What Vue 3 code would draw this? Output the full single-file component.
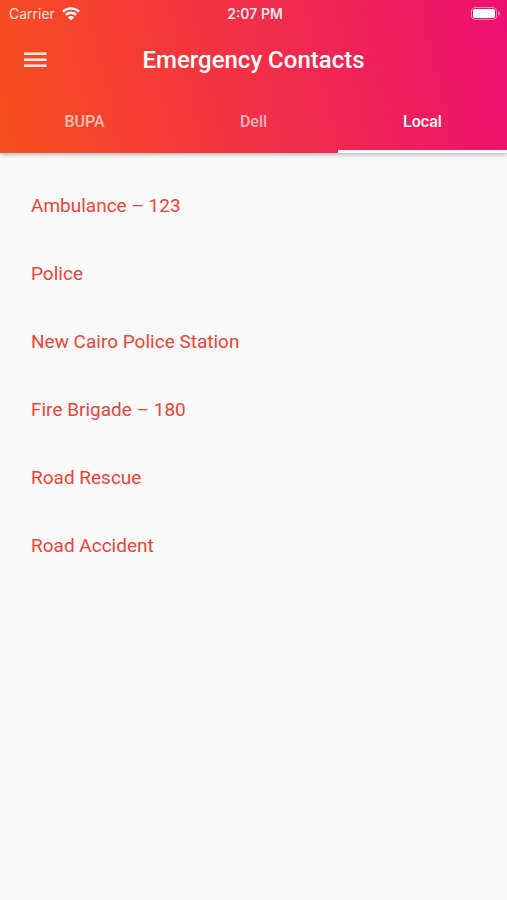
<template>
  <div class="app">
    <header class="header">
      <div class="status-bar">
        <div class="carrier">
          <span>Carrier</span>
          <svg class="wifi" viewBox="0 0 18 14" aria-hidden="true">
            <path d="M1 4.700a11.400 11.400 0 0 1 16 0" />
            <path d="M3.900 7.800a7.300 7.300 0 0 1 10.200 0" />
            <path class="wifi-dot" d="M9 13.500 5.900 10.300a4.400 4.400 0 0 1 6.200 0z" />
          </svg>
        </div>
        <span class="time">2:07 PM</span>
        <svg class="battery" viewBox="0 0 30 14" aria-hidden="true">
          <rect class="battery-case" x="0.5" y="0.5" width="25" height="12" rx="3.5" />
          <rect x="2" y="2" width="22" height="9" rx="2" />
          <path class="battery-cap" d="M27 4.5c1.3.4 2 1.1 2 2s-.7 1.600-2 2z" />
        </svg>
      </div>

      <div class="toolbar">
        <button class="menu" type="button" aria-label="Open menu">
          <svg viewBox="0 0 24 16" aria-hidden="true">
            <path d="M0 .5h22.500v2.500H0zM0 6.500h22.500v2.500H0zM0 12.500h22.500v2.500H0z" />
          </svg>
        </button>
        <h1 class="title">Emergency Contacts</h1>
      </div>

      <nav class="tabs" role="tablist">
        <button
          v-for="tab in tabs"
          :key="tab"
          class="tab"
          :class="{ active: tab === activeTab }"
          type="button"
          role="tab"
          :aria-selected="tab === activeTab"
          @click="activeTab = tab"
        >
          {{ tab }}
        </button>
      </nav>
    </header>

    <ul class="contacts">
      <li v-for="contact in contacts" :key="contact" class="contact">
        {{ contact }}
      </li>
    </ul>
  </div>
</template>

<script setup>
import { ref } from 'vue'

const tabs = ['BUPA', 'Dell', 'Local']
const activeTab = ref('Local')

const contacts = [
  'Ambulance – 123',
  'Police',
  'New Cairo Police Station',
  'Fire Brigade – 180',
  'Road Rescue',
  'Road Accident'
]
</script>

<style>
body {
  background: #fafafa;
}
</style>

<style scoped>
.app {
  min-height: 100vh;
  background: #fafafa;
  font-family: Roboto, 'Liberation Sans', sans-serif;
}

.header {
  color: #fff;
  background: linear-gradient(77deg, #f8511e 0%, #f22e48 52%, #ec1071 100%);
  box-shadow: 0 2px 4px rgba(0, 0, 0, 0.25);
}

.status-bar {
  display: grid;
  grid-template-columns: 1fr auto 1fr;
  align-items: center;
  height: 27px;
  padding: 0 6px 0 9px;
  font-family: Inter, 'Liberation Sans', sans-serif;
  font-size: 14px;
}

.carrier {
  display: flex;
  align-items: center;
  gap: 7px;
  color: rgba(255, 255, 255, 0.85);
}

.wifi {
  width: 18px;
  height: 14px;
  fill: none;
  stroke: #fff;
  stroke-width: 2.4;
}

.wifi-dot {
  fill: #fff;
  stroke: none;
}

.time {
  color: rgba(255, 255, 255, 0.9);
  font-weight: 600;
}

.battery {
  justify-self: end;
  width: 30px;
  height: 14px;
  fill: #fff;
}

.battery-case {
  fill: none;
  stroke: rgba(255, 255, 255, 0.5);
}

.battery-cap {
  fill: rgba(255, 255, 255, 0.5);
}

.toolbar {
  display: grid;
  grid-template-columns: 48px 1fr 48px;
  align-items: center;
  height: 66px;
  padding: 0 12px;
}

.menu {
  display: flex;
  align-items: center;
  height: 48px;
  padding: 0 12px;
  border: 0;
  background: none;
  cursor: pointer;
}

.menu svg {
  width: 24px;
  height: 16px;
  fill: rgba(255, 255, 255, 0.9);
}

.title {
  margin: 0;
  text-align: center;
  font-size: 24px;
  font-weight: 500;
  line-height: 32px;
}

.tabs {
  display: grid;
  grid-template-columns: repeat(3, 1fr);
}

.tab {
  height: 60px;
  padding: 0;
  border: 0;
  border-bottom: 3px solid transparent;
  color: rgba(255, 255, 255, 0.65);
  background: none;
  font-family: inherit;
  font-size: 16px;
  font-weight: 500;
  cursor: pointer;
}

.tab.active {
  border-bottom-color: #fff;
  color: #fff;
}

.contacts {
  margin: 0;
  padding: 18px 31px;
  list-style: none;
}

.contact {
  display: flex;
  align-items: center;
  height: 68px;
  color: #ee4339;
  font-size: 19px;
}
</style>
